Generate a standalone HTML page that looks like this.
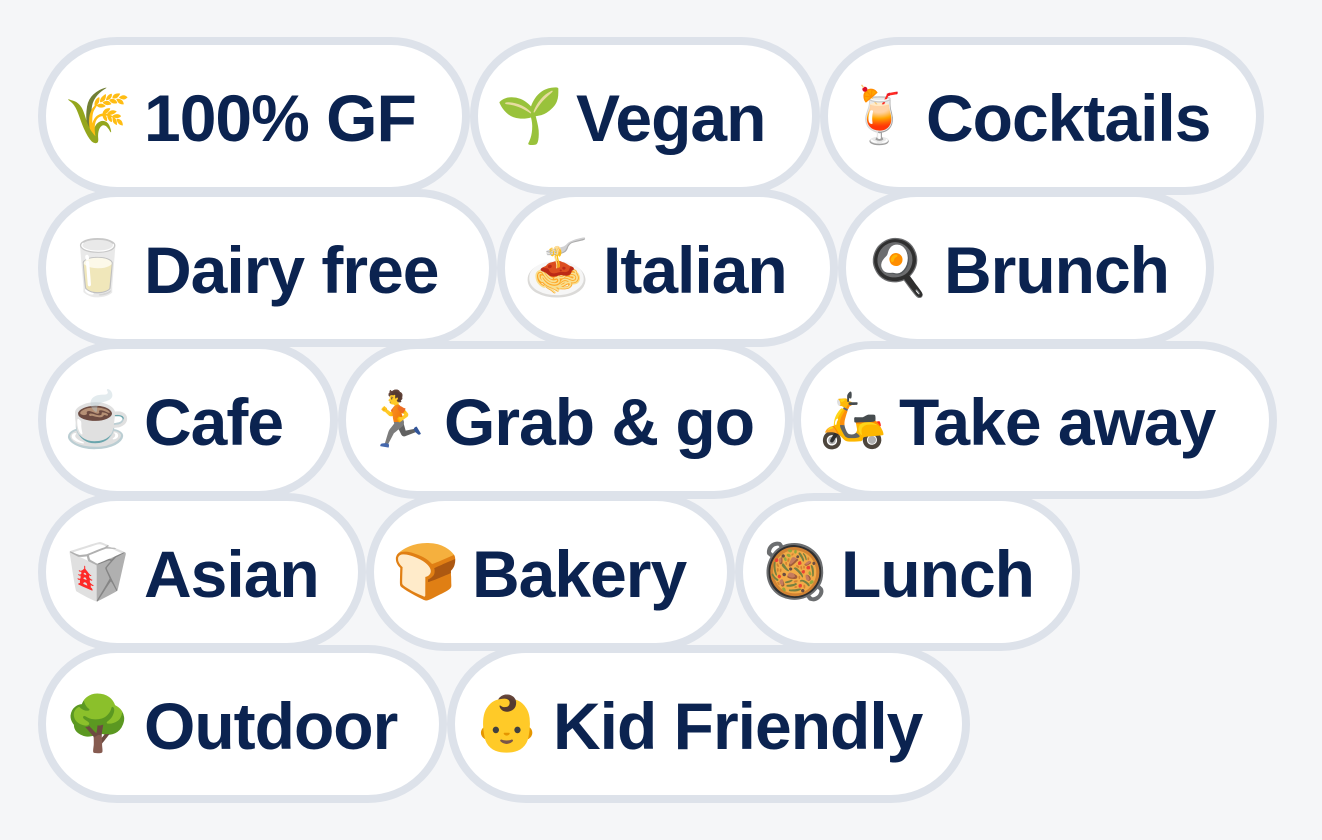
<!DOCTYPE html>
<html><head><meta charset="utf-8"><style>
body{margin:0;width:1322px;height:840px;background:#f5f6f8;position:relative;overflow:hidden;font-family:"Liberation Sans",sans-serif}
.p{position:absolute;height:142px;border:8px solid #dde2ea;border-radius:90px;background:#fff;box-sizing:content-box}
.p span.e{position:absolute;left:18px;top:40px;font-size:54px;line-height:64px;width:64px;text-align:center;font-family:"Noto Color Emoji","DejaVu Sans",sans-serif}
.p span.t{position:absolute;left:98px;top:35px;font-size:66px;line-height:76px;font-weight:bold;color:#0b2350;white-space:nowrap;letter-spacing:-1px}
</style></head><body>
<div class="p" style="left:38px;top:37px;width:416px"><span class="e">🌾</span><span class="t">100% GF</span></div>
<div class="p" style="left:470px;top:37px;width:334px"><span class="e">🌱</span><span class="t">Vegan</span></div>
<div class="p" style="left:820px;top:37px;width:428px"><span class="e">🍹</span><span class="t">Cocktails</span></div>
<div class="p" style="left:38px;top:189px;width:443px"><span class="e">🥛</span><span class="t">Dairy free</span></div>
<div class="p" style="left:497px;top:189px;width:325px"><span class="e">🍝</span><span class="t">Italian</span></div>
<div class="p" style="left:838px;top:189px;width:360px"><span class="e">🍳</span><span class="t">Brunch</span></div>
<div class="p" style="left:38px;top:341px;width:284px"><span class="e">☕</span><span class="t">Cafe</span></div>
<div class="p" style="left:338px;top:341px;width:439px"><span class="e">🏃</span><span class="t">Grab &amp; go</span></div>
<div class="p" style="left:793px;top:341px;width:468px"><span class="e">🛵</span><span class="t">Take away</span></div>
<div class="p" style="left:38px;top:493px;width:312px"><span class="e">🥡</span><span class="t">Asian</span></div>
<div class="p" style="left:366px;top:493px;width:353px"><span class="e">🍞</span><span class="t">Bakery</span></div>
<div class="p" style="left:735px;top:493px;width:329px"><span class="e">🥘</span><span class="t">Lunch</span></div>
<div class="p" style="left:38px;top:645px;width:393px"><span class="e">🌳</span><span class="t">Outdoor</span></div>
<div class="p" style="left:447px;top:645px;width:507px"><span class="e">👶</span><span class="t">Kid Friendly</span></div>
</body></html>
